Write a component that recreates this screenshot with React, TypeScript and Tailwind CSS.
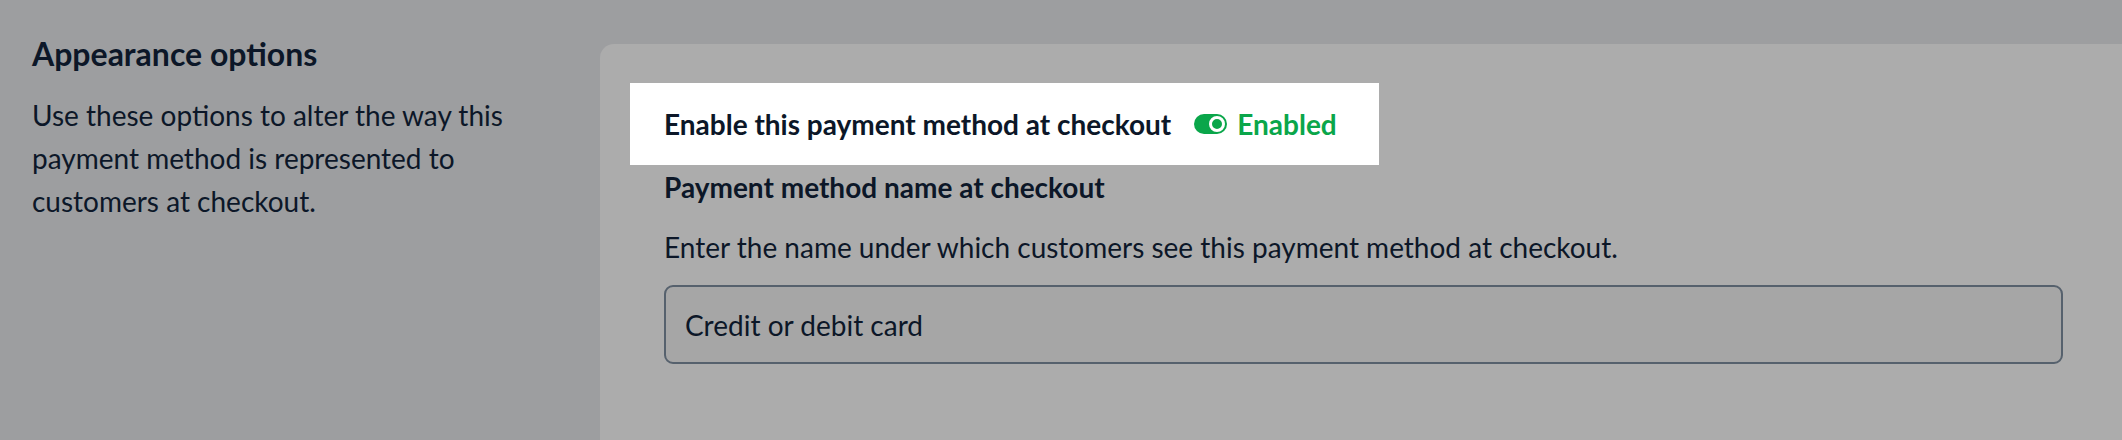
import { useState } from "react";

function Toggle({ on }: { on: boolean }) {
  return (
    <span
      role="switch"
      aria-checked={on}
      aria-label="Enable payment method"
      className="flex h-[20px] w-[33px] items-center justify-end rounded-full bg-[#0aa64a] px-[2px]"
    >
      <span className="h-[16px] w-[16px] rounded-full border-[3px] border-white bg-[#0aa64a]" />
    </span>
  );
}

export default function App() {
  const [name, setName] = useState("Credit or debit card");

  return (
    <div className="flex h-[440px] overflow-hidden bg-[#9d9ea0] font-['Lato','Noto_Sans',sans-serif] text-[#0c1728]">
      <div className="w-[600px] shrink-0 pl-8 pt-[33px]">
        <h2 className="text-[32px] font-bold leading-[42px]">Appearance options</h2>
        <p className="mt-[19px] w-[500px] text-[28px] leading-[43px]">
          Use these options to alter the way this payment method is represented to customers at checkout.
        </p>
      </div>

      <div className="mt-[44px] flex-1 rounded-tl-[14px] bg-[#acacac] pl-[64px] pr-[59px] pt-[39px]">
        <div className="-ml-[34px] flex h-[82px] w-fit items-center bg-white pl-[34px] pr-[42px]">
          <span className="text-[28px] font-bold">Enable this payment method at checkout</span>
          <span className="ml-[23px] flex items-center gap-[10px]">
            <Toggle on />
            <span className="text-[28px] font-bold text-[#0aa64a]">Enabled</span>
          </span>
        </div>

        <div className="mt-[4px] text-[28px] font-bold leading-[36px]">Payment method name at checkout</div>
        <div className="mt-[24px] text-[28px] leading-[36px]">
          Enter the name under which customers see this payment method at checkout.
        </div>
        <input
          value={name}
          onChange={(e) => setName(e.target.value)}
          className="mt-[20px] h-[79px] w-full rounded-[9px] border-2 border-[#56616d] bg-[#a6a6a6] px-[19px] text-[28px] text-[#0c1728] outline-none"
        />
      </div>
    </div>
  );
}
